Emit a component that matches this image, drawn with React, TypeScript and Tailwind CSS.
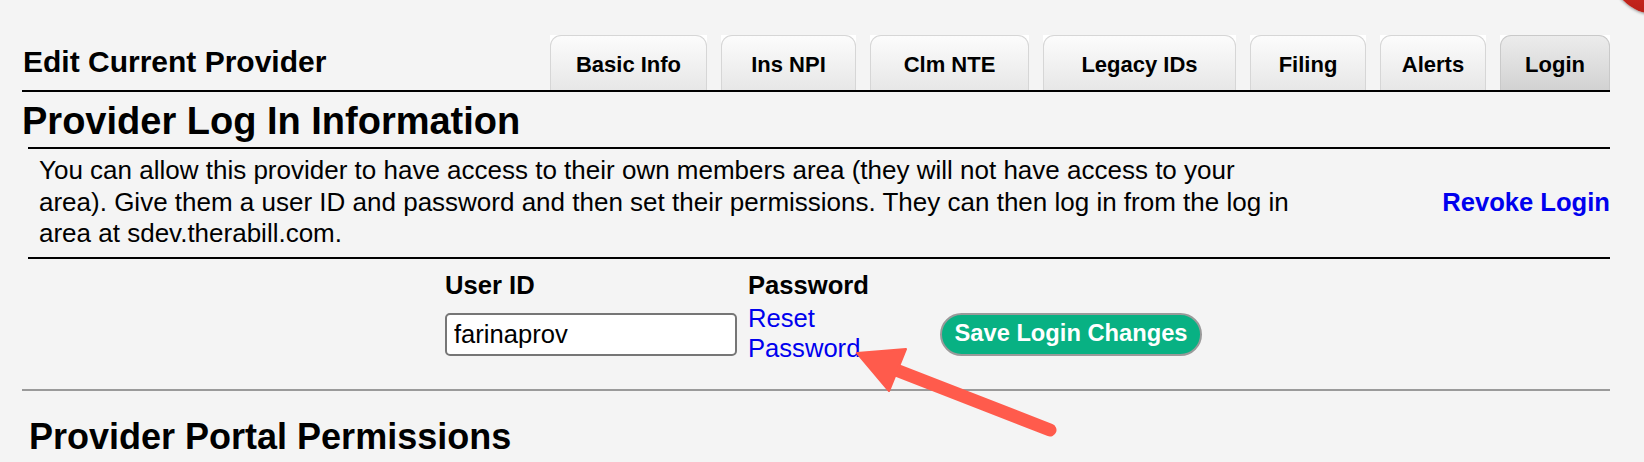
import React from 'react'

const tabs = [
  { label: 'Basic Info', width: 'w-[157px]' },
  { label: 'Ins NPI', width: 'w-[135px]' },
  { label: 'Clm NTE', width: 'w-[159px]' },
  { label: 'Legacy IDs', width: 'w-[193px]' },
  { label: 'Filing', width: 'w-[116px]' },
  { label: 'Alerts', width: 'w-[106px]' },
  { label: 'Login', width: 'w-[110px]', active: true },
]

function Tab({ label, width, active }: { label: string; width: string; active?: boolean }) {
  return (
    <div className={`${width} h-[55px] bg-white`}>
      <div
        className={`flex h-full items-center justify-center rounded-t-[11px] border border-b-0 pt-[3px] text-[22px] font-bold ${
          active
            ? 'border-[#c9c9c9] bg-gradient-to-b from-[#ececec] to-[#d2d2d2]'
            : 'border-[#d6d6d6] bg-gradient-to-b from-[#fcfcfc] to-[#e7e7e7]'
        }`}
      >
        {label}
      </div>
    </div>
  )
}

export default function App() {
  return (
    <div className="relative h-[462px] w-full overflow-hidden bg-[#f4f4f4] font-['Liberation_Sans',Arial,sans-serif] text-black">
      <div className="ml-[22px] w-[1588px] pt-[35px]">
        {/* Header with tabs */}
        <div className="flex items-end justify-between border-b-2 border-black">
          <h3 className="pb-[13px] pl-[1px] text-[30px] font-bold leading-[30px]">Edit Current Provider</h3>
          <nav className="flex gap-[14px]">
            {tabs.map((t) => (
              <Tab key={t.label} {...t} />
            ))}
          </nav>
        </div>

        <h1 className="mt-[10px] mb-[7px] text-[38px] font-bold leading-[38px]">Provider Log In Information</h1>

        {/* Intro */}
        <div className="ml-[6px] flex items-center justify-between border-y-2 border-black pt-[6px] pb-[7px] pl-[11px]">
          <p className="text-[26px] leading-[31.5px]">
            You can allow this provider to have access to their own members area (they will not have access to your
            <br />
            area). Give them a user ID and password and then set their permissions. They can then log in from the log in
            <br />
            area at sdev.therabill.com.
          </p>
          <a href="#" className="text-[25.6px] font-bold text-[#0000ee]">
            Revoke Login
          </a>
        </div>

        {/* Login form */}
        <div className="mt-[11px] grid grid-cols-[303px_121px_auto] grid-rows-[33px_63px] pl-[423px]">
          <label className="self-start text-[25.6px] font-bold leading-[31.5px]">User ID</label>
          <div className="self-start text-[25.6px] font-bold leading-[31.5px]">Password</div>
          <div />
          <input
            defaultValue="farinaprov"
            className="h-[43px] w-[292px] self-center rounded-[5px] border-2 border-[#767676] bg-white px-[7px] text-[25.6px] outline-none"
          />
          <a href="#" className="self-start text-[25.6px] leading-[30px] text-[#0000ee]">
            Reset Password
          </a>
          <div className="ml-[71px] self-center">
            <button className="h-[43px] w-[262px] rounded-full border-2 border-[#9a9a9a] bg-[#08b183] text-[23.7px] font-bold text-white">
              Save Login Changes
            </button>
          </div>
        </div>

        <div className="mt-[23px] border-t-2 border-[#9a9a9a]" />

        <h2 className="mt-[28px] ml-[7px] text-[36px] font-bold leading-[36px]">Provider Portal Permissions</h2>
      </div>

      {/* red badge peeking in the corner */}
      <div className="absolute top-[-74px] left-[1611px] h-[88px] w-[88px] rounded-full bg-[radial-gradient(circle_at_35%_35%,#e2372c,#a8150f)] shadow-[0_1px_3px_rgba(0,0,0,0.4)]" />

      {/* annotation arrow */}
      <svg className="pointer-events-none absolute top-0 left-0" width="1644" height="462" viewBox="0 0 1644 462">
        <line x1="896" y1="370" x2="1050" y2="430" stroke="#ff5b4c" strokeWidth="13" strokeLinecap="round" />
        <polygon points="857,353 906,349 889,391" fill="#ff5b4c" strokeLinejoin="round" stroke="#ff5b4c" strokeWidth="2" />
      </svg>
    </div>
  )
}
